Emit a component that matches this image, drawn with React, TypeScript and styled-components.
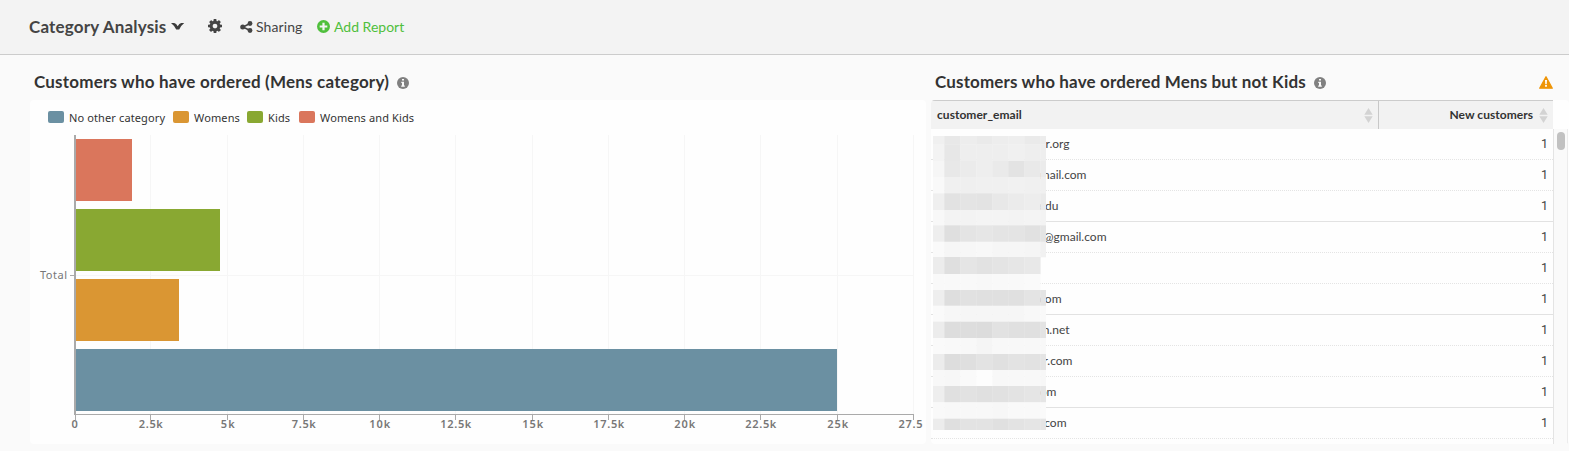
import React from "react";
import styled, { createGlobalStyle } from "styled-components";

const GlobalStyle = createGlobalStyle`
  * { box-sizing: border-box; }
  body { margin: 0; background: #fafafa; overflow: hidden; }
`;

const Page = styled.div`
  height: 451px;
  display: flex;
  flex-direction: column;
  font-family: Lato, "Open Sans", sans-serif;
  color: #333;
  background: #fafafa;
`;

const Toolbar = styled.header`
  height: 55px;
  display: flex;
  align-items: center;
  padding: 0 0 1px 29px;
  background: #f3f3f3;
  border-bottom: 1px solid #ccc;
  color: #444;
  white-space: nowrap;
`;

const DashboardName = styled.h1`
  display: flex;
  align-items: center;
  gap: 5px;
  margin: 0 24px 0 0;
  width: 155px;
  font-size: 17px;
  line-height: 20px;
  font-weight: 700;
  letter-spacing: 0.18px;
`;

const NameText = styled.span`
  width: 137px;
`;

const GearSlot = styled.span`
  display: flex;
  width: 32px;
  margin-top: -2px;
`;

const Action = styled.button<{ $accent?: boolean; $width: number }>`
  display: flex;
  align-items: center;
  gap: 3px;
  width: ${(p) => p.$width}px;
  padding: 0;
  border: 0;
  background: none;
  font: 400 14px/18px Lato, sans-serif;
  letter-spacing: ${(p) => (p.$accent ? 0 : 0.1)}px;
  color: ${(p) => (p.$accent ? "#4fbf3c" : "#444")};
`;

const Board = styled.main`
  display: flex;
  gap: 5px;
  padding-left: 30px;
`;

const Panel = styled.section<{ $width: number }>`
  width: ${(p) => p.$width}px;
`;

const PanelHead = styled.div`
  height: 45px;
  display: flex;
  align-items: center;
  gap: 8px;
  padding: 10px 16px 0 4px;
`;

const PanelTitle = styled.h2<{ $spacing: number; $width: number }>`
  margin: 0;
  padding-bottom: 2px;
  width: ${(p) => p.$width}px;
  font-size: 17px;
  line-height: 22px;
  font-weight: 700;
  white-space: nowrap;
  letter-spacing: ${(p) => p.$spacing}px;
`;

const WarningSlot = styled.span`
  display: flex;
  margin-left: auto;
`;

const PanelBody = styled.div`
  position: relative;
  height: 344px;
  overflow: hidden;
  background: #fefefe;
  border-radius: 4px;
`;

const Legend = styled.div`
  height: 35px;
  display: flex;
  align-items: center;
  padding-left: 18px;
`;

const LegendItem = styled.span<{ $width: number }>`
  display: flex;
  align-items: center;
  gap: 5px;
  width: ${(p) => p.$width}px;
  font: 400 11px/14px "Noto Sans", sans-serif;
  letter-spacing: 0.12px;
  white-space: nowrap;
`;

const Swatch = styled.i<{ $color: string }>`
  flex: none;
  width: 16px;
  height: 12px;
  margin-top: -1px;
  border-radius: 2px;
  background: ${(p) => p.$color};
`;

const Chart = styled.svg`
  display: block;
  font-family: "Noto Sans", sans-serif;
  font-size: 11px;
  fill: #777;
`;

const TableHead = styled.div`
  display: flex;
  width: 622px;
  height: 29px;
  background: #f2f2f2;
  border-top: 1px solid #ccc;
  font-size: 12px;
  font-weight: 700;
`;

const HeadCell = styled.div<{ $width: number; $end?: boolean }>`
  display: flex;
  align-items: center;
  justify-content: ${(p) => (p.$end ? "flex-end" : "space-between")};
  gap: 6px;
  width: ${(p) => p.$width}px;
  padding: 0 5px;
  border-right: ${(p) => (p.$end ? 0 : "1px solid #c8c8c8")};
`;

const HeadLabel = styled.span`
  padding: 0 0 2px 1px;
  letter-spacing: 0.04px;
`;

const TableArea = styled.div`
  display: flex;
  height: 315px;
`;

const Rows = styled.div`
  width: 622px;
`;

const Row = styled.div<{ $solid: boolean }>`
  display: flex;
  justify-content: space-between;
  height: 31px;
  border-bottom: 1px ${(p) => (p.$solid ? "solid #e2e2e2" : "dotted #e4e4e4")};
  font-size: 12px;
  line-height: 30px;
  color: #444;
`;

const Email = styled.span<{ $width: number }>`
  width: ${(p) => p.$width}px;
  text-align: right;
  white-space: nowrap;
`;

const Count = styled.span`
  padding-right: 5px;
  font-family: Roboto, sans-serif;
  font-size: 12.5px;
`;

const ScrollTrack = styled.div`
  width: 15px;
  padding: 3px 2px 0 3px;
  background: #fafafa;
  border-left: 1px solid #e4e4e4;
  border-right: 1px solid #ececec;
`;

const ScrollThumb = styled.div`
  width: 8px;
  height: 18px;
  border-radius: 4px;
  background: #c1c1c1;
`;

const Redaction = styled.svg`
  position: absolute;
  left: 2px;
  top: 36px;
`;

const InfoIcon = () => (
  <svg width="12" height="12" viewBox="0 0 12 12">
    <circle cx="6" cy="6" r="6" fill="#808080" />
    <path d="M5 2h2v1.600H5zM4.300 4.700H7v3.700h.8v1.300H4.200V8.400H5V6h-.7z" fill="#fafafa" />
  </svg>
);

const Chevron = () => (
  <svg width="14" height="9" viewBox="0 0 14 9" style={{ flex: "none" }}>
    <path d="M0 1h3.200Q5.300 1.600 6.700 4.300Q8.200 1.600 10.200 1H13.200Q10.200 3.200 8.200 7.600H5.200Q3 3.200 0 1z" fill="#3b3b3b" />
  </svg>
);

const Gear = () => (
  <svg width="14" height="14" viewBox="0 0 1536 1536">
    <path
      fill="#444"
      d="M1024 768q0-106-75-181t-181-75-181 75-75 181 75 181 181 75 181-75 75-181zm512-109v222q0 12-8 23t-20 13l-185 28q-19 54-39 91 35 50 107 138 10 12 10 25t-9 23q-27 37-99 108t-94 71q-12 0-26-9l-138-108q-44 23-91 38-16 136-29 186-7 28-36 28H657q-14 0-24.500-8.500T621 1506l-28-184q-49-16-90-37l-141 107q-10 9-25 9-14 0-25-11-126-114-165-168-7-10-7-23 0-12 8-23 15-21 51-66.500t54-70.500q-27-50-41-99L29 913q-13-2-21-12.500T0 877V655q0-12 8-23t19-13l186-28q14-46 39-92-40-57-107-138-10-12-10-24 0-10 9-23 26-36 98.500-107.500T337 135q13 0 26 10l138 107q44-23 91-38 16-136 29-186 7-28 36-28h222q14 0 24.500 8.500T915 30l28 184q49 16 90 37l142-107q9-9 24-9 13 0 25 10 129 119 165 170 7 8 7 22 0 12-8 23-15 21-51 66.500t-54 70.500q26 50 41 98l183 28q13 2 21 12.500t8 23.500z"
    />
  </svg>
);

const Share = () => (
  <svg width="13" height="12" viewBox="0 0 13 12">
    <path d="M10 2.500L3 6l7 3.500" fill="none" stroke="#444" strokeWidth="1.600" />
    <circle cx="10" cy="2.500" r="2.400" fill="#444" />
    <circle cx="2.700" cy="6" r="2.500" fill="#444" />
    <circle cx="10" cy="9.500" r="2.400" fill="#444" />
  </svg>
);

const Plus = () => (
  <svg width="15" height="14" viewBox="0 0 15 14">
    <circle cx="7.500" cy="6.500" r="6.500" fill="#4fbf3c" />
    <path d="M7.500 2.700v7.600M3.700 6.500h7.600" stroke="#f3f3f3" strokeWidth="2.200" />
  </svg>
);

const Warning = () => (
  <svg width="14" height="13" viewBox="0 0 14 13">
    <path d="M7 .8L13.300 12.200H.7z" fill="#ee9508" stroke="#ee9508" strokeWidth="1.300" strokeLinejoin="round" />
    <path d="M6 4h2l-.3 4.200H6.300zM6.100 9.100h1.800v1.700H6.100z" fill="#fff" />
  </svg>
);

const Sort = () => (
  <svg width="9" height="15" viewBox="0 0 9 15">
    <path d="M4.500 0L8.700 6.700H.3zM4.500 15L8.700 8.200H.3z" fill="#d3d3d3" />
  </svg>
);

const legend = [
  { name: "No other category", color: "#6b90a2", width: 125 },
  { name: "Womens", color: "#da9633", width: 74 },
  { name: "Kids", color: "#89a832", width: 52 },
  { name: "Womens and Kids", color: "#da765c", width: 130 },
];

const bars = [
  { y: 4, width: 56, color: "#da765c" },
  { y: 74, width: 144, color: "#89a832" },
  { y: 144, width: 103, color: "#da9633" },
  { y: 214, width: 761, color: "#6b90a2" },
];

const ticks = [
  { x: 45, label: "0", w: 7 },
  { x: 120, label: "2.5k", w: 24 },
  { x: 197, label: "5k", w: 14 },
  { x: 273, label: "7.5k", w: 24 },
  { x: 349, label: "10k", w: 21 },
  { x: 425, label: "12.5k", w: 31 },
  { x: 502, label: "15k", w: 21 },
  { x: 578, label: "17.5k", w: 31 },
  { x: 654, label: "20k", w: 21 },
  { x: 730, label: "22.5k", w: 31 },
  { x: 807, label: "25k", w: 21 },
  { x: 883, label: "27.5", w: 24 },
];

const rows: [string, number][] = [
  ["r.org", 138.5],
  ["mail.com", 155.5],
  ["edu", 127.5],
  ["@gmail.com", 175.5],
  ["", 120],
  ["com", 130.5],
  ["n.net", 138.5],
  ["r.com", 141.5],
  ["om", 125.5],
  ["com", 135.5],
];

/* Column and row edges of the pixelated block, relative to its corner. */
const colEdges = [0, 11.3, 27.3, 43.3, 59.3, 75.3, 91.3, 107.3, 113];
const rowEdges = [0, 8.3, 25, 41, 57.3, 74, 89.3, 105.7, 121, 138, 154, 169.7, 185.7, 202, 218, 234, 250, 266.3, 282.7, 293.7];
const shades = [
  "f0 e8 ed ea ed ee ea ec",
  "f3 e7 ee ee ee f0 ee ee",
  "f6 e8 eb ee ea e3 e9 eb",
  "f9 f0 ef f0 f0 f1 f0 f0",
  "ef e2 e4 e3 e8 eb ed ea",
  "f8 f3 f3 f4 f4 f3 f4 f3",
  "ee df e4 e6 e4 e4 e1 e4",
  "fa f6 f7 f8 f6 f6 f5 f1",
  "ec df e5 e2 e4 e6 e8 --",
  "f9 f9 f9 f8 f9 f9 fa --",
  "ee de e1 e0 e0 e0 e4 e4",
  "fa f7 f6 f6 f6 f6 f8 f9",
  "ec dd dd dc e2 e0 e0 e3",
  "fa f9 f8 f5 f8 f8 f8 f8",
  "ec dd df e3 e0 e3 e2 e4",
  "f8 f7 fa fd f8 f8 f8 f7",
  "ee e0 e2 e0 e1 e3 e5 e5",
  "f9 f8 f8 f8 f7 f9 f9 fa",
  "ec df e3 e3 e0 e3 e5 e5",
].map((line) => line.split(" "));

export default function App() {
  return (
    <Page>
      <GlobalStyle />
      <Toolbar>
        <DashboardName>
          <NameText>Category Analysis</NameText>
          <Chevron />
        </DashboardName>
        <GearSlot><Gear /></GearSlot>
        <Action $width={76}><Share />Sharing</Action>
        <Action $width={90} $accent><Plus />Add Report</Action>
      </Toolbar>
      <Board>
        <Panel $width={896}>
          <PanelHead>
            <PanelTitle $width={355} $spacing={0.2}>Customers who have ordered (Mens category)</PanelTitle>
            <InfoIcon />
          </PanelHead>
          <PanelBody>
            <Legend>
              {legend.map((l) => (
                <LegendItem key={l.name} $width={l.width}>
                  <Swatch $color={l.color} />
                  {l.name}
                </LegendItem>
              ))}
            </Legend>
            <Chart width="896" height="309">
              <g shapeRendering="crispEdges">
                {ticks.slice(1).map((t) => (
                  <rect key={t.x} x={t.x} y="0" width="1" height="279" fill="#f6f6f6" />
                ))}
                <rect x="46" y="140" width="838" height="1" fill="#f6f6f6" />
                {bars.map((b) => (
                  <rect key={b.y} x="46" y={b.y} width={b.width} height="62" fill={b.color} />
                ))}
                <rect x="44" y="0" width="2" height="280" fill="#aaa" />
                <rect x="40" y="140" width="4" height="1" fill="#aaa" />
                <rect x="44" y="279" width="840" height="1" fill="#aaa" />
                {ticks.map((t) => (
                  <rect key={t.x} x={t.x} y="279" width="1" height="6" fill="#aaa" />
                ))}
              </g>
              <text x="10" y="144" textLength="27">Total</text>
              <g fontWeight="600">
                {ticks.map((t) => (
                  <text
                    key={t.x}
                    x={t.x + (t.label === "0" ? 0 : 0.8) - t.w / 2 - (t.label === "27.5" ? 3.3 : 0)}
                    y="293"
                    textLength={t.w}
                  >
                    {t.label}
                  </text>
                ))}
              </g>
            </Chart>
          </PanelBody>
        </Panel>
        <Panel $width={638}>
          <PanelHead>
            <PanelTitle $width={371} $spacing={0.15}>Customers who have ordered Mens but not Kids</PanelTitle>
            <InfoIcon />
            <WarningSlot><Warning /></WarningSlot>
          </PanelHead>
          <PanelBody>
            <TableHead>
              <HeadCell $width={448}><HeadLabel>customer_email</HeadLabel><Sort /></HeadCell>
              <HeadCell $width={174} $end><HeadLabel>New customers</HeadLabel><Sort /></HeadCell>
            </TableHead>
            <TableArea>
              <Rows>
                {rows.map(([tail, width], i) => (
                  <Row key={i} $solid={i % 3 === 2}>
                    <Email $width={width}>{tail}</Email>
                    <Count>1</Count>
                  </Row>
                ))}
              </Rows>
              <ScrollTrack><ScrollThumb /></ScrollTrack>
            </TableArea>
            <Redaction width="113" height="294">
              {shades.map((line, r) =>
                line.map((s, c) =>
                  s === "--" ? null : (
                    <rect
                      key={`${r}-${c}`}
                      x={colEdges[c]}
                      y={rowEdges[r]}
                      width={colEdges[c + 1] - colEdges[c] + 0.3}
                      height={rowEdges[r + 1] - rowEdges[r] + 0.3}
                      fill={`#${s}${s}${s}`}
                    />
                  ),
                ),
              )}
            </Redaction>
          </PanelBody>
        </Panel>
      </Board>
    </Page>
  );
}
